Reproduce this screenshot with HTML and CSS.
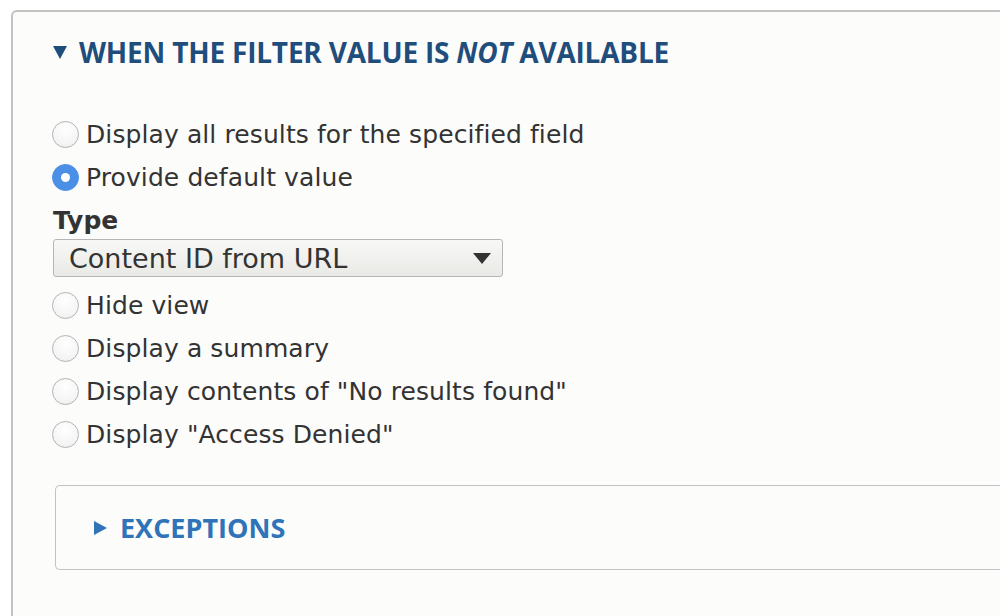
FILE: index.html
```html
<!DOCTYPE html>
<html>
<head>
<meta charset="utf-8">
<link rel="stylesheet" href="styles.css">
</head>
<body>
<fieldset class="panel">
  <div class="legend"><span class="tri-down"></span><span>WHEN THE FILTER VALUE IS <em>NOT</em> AVAILABLE</span></div>
  <div class="options">
    <label class="radio"><span class="dot"></span>Display all results for the specified field</label>
    <label class="radio"><span class="dot on"></span>Provide default value</label>
    <div class="type">
      <div class="type-label">Type</div>
      <div class="select"><span>Content ID from URL</span><span class="arrow"></span></div>
    </div>
    <label class="radio"><span class="dot"></span>Hide view</label>
    <label class="radio"><span class="dot"></span>Display a summary</label>
    <label class="radio"><span class="dot"></span>Display contents of "No results found"</label>
    <label class="radio"><span class="dot"></span>Display "Access Denied"</label>
  </div>
  <div class="sub">
    <div class="sub-title"><span class="tri-right"></span><span>EXCEPTIONS</span></div>
  </div>
</fieldset>
</body>
</html>
```
FILE: styles.css
```css
html, body { margin: 0; padding: 0; background: #fff; }
body { width: 1000px; height: 616px; overflow: hidden; font-family: "DejaVu Sans", sans-serif; color: #333; }
.panel {
  margin: 10px 0 0 11px;
  min-width: 0;
  width: 989px;
  height: 606px;
  box-sizing: border-box;
  border: 2px solid #c2c2c2;
  border-right: none;
  border-bottom: none;
  border-radius: 6px 0 0 0;
  background: #fcfcfa;
  padding: 26px 0 0 40px;
}
.legend {
  display: flex; align-items: center;
  color: #1f4d7c;
  font-family: "Open Sans", sans-serif;
  font-weight: 700; font-size: 28px; letter-spacing: -0.2px;
  height: 28px;
}
.legend em { font-style: italic; }
.tri-down {
  width: 0; height: 0;
  border-left: 7px solid transparent; border-right: 7px solid transparent;
  border-top: 13px solid #1f4d7c;
  margin-right: 12px;
}
.options { margin-top: 47px; display: flex; flex-direction: column; }
.radio {
  display: flex; align-items: center; height: 43px;
  font-size: 25px; letter-spacing: 0.1px; margin-left: -1px;
}
.dot {
  width: 25px; height: 25px; border-radius: 50%;
  border: 1px solid #b4b4b4;
  background: radial-gradient(circle at 50% 30%, #fff 0%, #f4f4f4 70%, #e8e8e8 100%);
  margin-right: 7px; flex: none;
  display: flex; align-items: center; justify-content: center;
}
.dot.on { background: #4b8fe6; border-color: #4b8fe6; }
.dot.on::after { content: ""; width: 9px; height: 9px; border-radius: 50%; background: #fff; }
.type { margin-bottom: 7px; }
.type-label { font-weight: 700; font-size: 25px; line-height: 36px; padding-top: 4px; }
.select {
  width: 450px; height: 38px; box-sizing: border-box;
  border: 1px solid #b6b6b6; border-radius: 3px;
  background: linear-gradient(#f8f8f6, #e9e9e6);
  display: flex; align-items: center; justify-content: space-between;
  padding: 0 11px 0 15px;
  font-size: 27px;
}
.arrow {
  width: 0; height: 0;
  border-left: 9px solid transparent; border-right: 9px solid transparent;
  border-top: 11px solid #333;
}
.sub {
  margin-top: 29px; margin-left: 2px;
  height: 85px; box-sizing: border-box;
  border: 1px solid #c2c2c2; border-right: none;
  border-radius: 5px 0 0 5px;
  background: #fcfcfa;
  display: flex; align-items: center; padding-left: 38px;
}
.sub-title {
  display: flex; align-items: center;
  color: #2f73b9;
  font-family: "Open Sans", sans-serif; font-weight: 700; font-size: 27px;
}
.tri-right {
  width: 0; height: 0;
  border-top: 7px solid transparent; border-bottom: 7px solid transparent;
  border-left: 13px solid #2f73b9;
  margin-right: 13px;
}
```
